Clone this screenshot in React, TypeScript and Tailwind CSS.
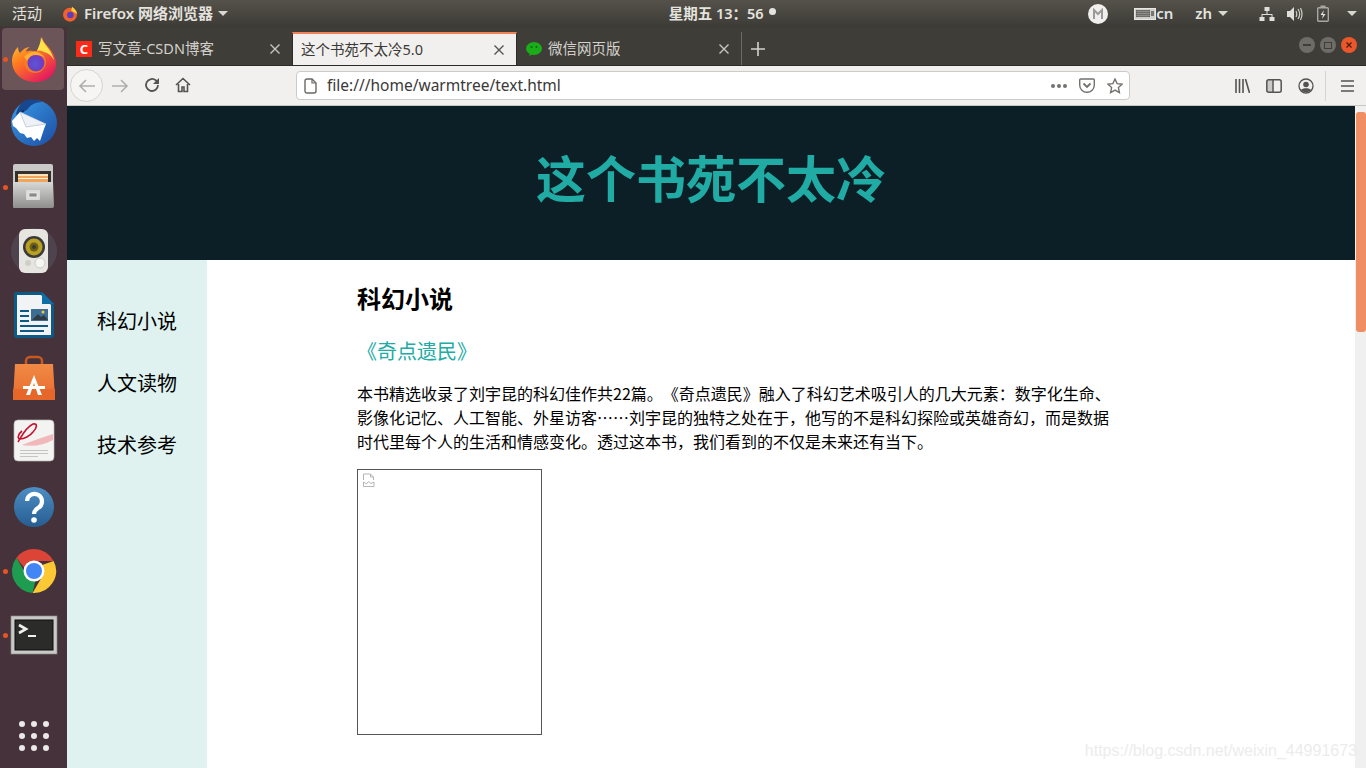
import React from 'react';

const CJK = "font-['Noto_Sans','Noto_Sans_CJK_SC',sans-serif]";

// dock icons
const FirefoxIcon = () => (
  <svg width="48" height="48" viewBox="0 0 48 48">
    <defs>
      <linearGradient id="ffa" x1="0" y1="0" x2="0.7" y2="1">
        <stop offset="0" stopColor="#ffd93b" />
        <stop offset="0.45" stopColor="#ff7a1f" />
        <stop offset="1" stopColor="#e3195f" />
      </linearGradient>
      <radialGradient id="ffb" cx="0.45" cy="0.55" r="0.6">
        <stop offset="0" stopColor="#5a58d6" />
        <stop offset="0.7" stopColor="#6b3fc4" />
        <stop offset="1" stopColor="#9a2fc0" />
      </radialGradient>
    </defs>
    <path d="M32 2c1 5 4 7 8 12 5 6 6 12 6 15 0 11-9 18-21 18C12 47 2 38 2 26c0-6 3-11 6-14 0 3 1 5 2 6 3-4 6-6 10-6-2 1-4 3-4 5 3-2 8-1 10 0 3-5 6-9 6-15z" fill="url(#ffa)" />
    <path d="M31 2c1 4 4 7 7 11 3 4 5 8 6 12-3-5-6-7-10-8-2-1-5-2-7-1 2-5 4-9 4-14z" fill="#ffe14a" />
    <circle cx="25" cy="27" r="11" fill="#f47a23" />
    <circle cx="26" cy="28" r="8.5" fill="url(#ffb)" />
    <path d="M14 22c3-4 8-6 13-5 3 1 6 3 7 5-4-2-9-3-13-1-2 1-3 3-4 5-1-2-2-3-3-4z" fill="#ffb02e" />
  </svg>
);

const ThunderbirdIcon = () => (
  <svg width="48" height="48" viewBox="0 0 48 48">
    <defs>
      <linearGradient id="tb" x1="0" y1="0" x2="1" y2="1">
        <stop offset="0" stopColor="#3a9be8" />
        <stop offset="1" stopColor="#1c4da3" />
      </linearGradient>
    </defs>
    <circle cx="24" cy="24" r="23" fill="url(#tb)" />
    <path d="M14 2c5-2 12-2 18 1-7 0-12 3-15 8L6 16c1-6 4-11 8-14z" fill="#17488f" />
    <path d="M2 22l8-9 26 12-2 5-2 6-2 6-3-3-3 3-3-4-4 1-3-4-4-1-4-5-3-2z" fill="#fff" />
    <path d="M10 13l26 12-20 3z" fill="#eef1f6" stroke="#aab5c6" strokeWidth="0.6" />
    <circle cx="13" cy="12" r="1.3" fill="#12305f" />
  </svg>
);

const FilesIcon = () => (
  <svg width="48" height="48" viewBox="0 0 48 48">
    <defs>
      <linearGradient id="fa" x1="0" y1="0" x2="0" y2="1">
        <stop offset="0" stopColor="#d8d8d6" />
        <stop offset="1" stopColor="#8e8e8c" />
      </linearGradient>
    </defs>
    <rect x="3" y="1" width="40" height="44" rx="2" fill="#c9c9c7" />
    <rect x="5" y="8" width="36" height="14" fill="#33302e" />
    <rect x="8" y="11" width="30" height="8" fill="#f0a55a" />
    <rect x="8" y="11" width="30" height="2" fill="#fbe2b9" />
    <rect x="8" y="15" width="30" height="1" fill="#fff3dd" />
    <path d="M3 19h40l1 24a2 2 0 0 1-2 2H5a2 2 0 0 1-2-2z" fill="url(#fa)" />
    <rect x="16" y="27" width="14" height="10" rx="1" fill="#dcdcda" />
    <rect x="19" y="30" width="8" height="4" fill="#8a8a88" stroke="#f2f2f2" strokeWidth="0.7" />
  </svg>
);

const SpeakerIcon = () => (
  <svg width="48" height="48" viewBox="0 0 48 48">
    <circle cx="24" cy="24" r="23" fill="#5b5a68" opacity="0.45" />
    <circle cx="24" cy="24" r="18" fill="#4a4450" opacity="0.6" />
    <rect x="9" y="2" width="29" height="44" rx="6" fill="#e6e5df" />
    <circle cx="24" cy="20" r="11" fill="#3a3a38" />
    <circle cx="24" cy="20" r="8.5" fill="#b8a024" />
    <circle cx="24" cy="20" r="4.5" fill="#6d5f16" />
    <circle cx="24" cy="20" r="2" fill="#3a3a38" />
    <circle cx="18" cy="36" r="3" fill="#cfcfc9" />
    <circle cx="30" cy="36" r="5" fill="#f5f5f2" stroke="#b4b4ae" strokeWidth="0.6" />
  </svg>
);

const WriterIcon = () => (
  <svg width="48" height="48" viewBox="0 0 48 48">
    <path d="M6 1h26l12 12v31a3 3 0 0 1-3 3H7a3 3 0 0 1-3-3V3a2 2 0 0 1 2-2z" fill="#0e5a87" />
    <path d="M7 4h24l10 10v30H7z" fill="#f1f3f4" />
    <path d="M32 1l12 12H32z" fill="#0e6ea6" />
    <rect x="10" y="19" width="9" height="2" fill="#0e5a87" />
    <rect x="10" y="24" width="9" height="2" fill="#0e5a87" />
    <rect x="10" y="29" width="9" height="2" fill="#0e5a87" />
    <rect x="10" y="34" width="28" height="2" fill="#0e5a87" />
    <rect x="10" y="39" width="24" height="2" fill="#0e5a87" />
    <rect x="21" y="18" width="17" height="12" fill="#3d6f93" />
    <path d="M22 29l6-6 3 3 3-2 4 5z" fill="#2f3c46" />
    <circle cx="33" cy="21" r="1.5" fill="#f1c83b" />
  </svg>
);

const StoreIcon = () => (
  <svg width="48" height="48" viewBox="0 0 48 48">
    <defs>
      <linearGradient id="st" x1="0" y1="0" x2="0" y2="1">
        <stop offset="0" stopColor="#f08a45" />
        <stop offset="1" stopColor="#e96a2c" />
      </linearGradient>
    </defs>
    <path d="M16 12V6a4 4 0 0 1 4-4h8a4 4 0 0 1 4 4v6" fill="none" stroke="#c9581f" strokeWidth="2.5" />
    <path d="M5 9h38l2 35a1 1 0 0 1-1 1H4a1 1 0 0 1-1-1z" fill="url(#st)" />
    <path d="M3 34h42l0 10a1 1 0 0 1-1 1H4a1 1 0 0 1-1-1z" fill="#e7662a" />
    <path d="M24 20l-8 20h4l4-12 4 12h4z" fill="#fff" />
    <rect x="13" y="31" width="22" height="3" fill="#fff" />
  </svg>
);

const EvinceIcon = () => (
  <svg width="48" height="48" viewBox="0 0 48 48">
    <rect x="4" y="1" width="40" height="41" rx="4" fill="#f3f3f1" stroke="#b8b8b6" strokeWidth="0.7" />
    <path d="M8 23c3-5 8-15 15-18 5-1 4 4 0 8-3 4-9 7-13 7-3 0-2-5 2-8" fill="none" stroke="#c8102e" strokeWidth="1.6" />
    <path d="M12 26c9-4 20-7 31-11v6c-9 5-20 7-31 5z" fill="#f0b8ba" />
    <rect x="10" y="31" width="28" height="1" fill="#c4c4c2" />
    <rect x="10" y="34" width="28" height="1" fill="#c4c4c2" />
    <rect x="10" y="37" width="18" height="1" fill="#c4c4c2" />
  </svg>
);

const HelpIcon = () => (
  <svg width="48" height="48" viewBox="0 0 48 48">
    <defs>
      <linearGradient id="hp" x1="0" y1="0" x2="0" y2="1">
        <stop offset="0" stopColor="#4d8ec4" />
        <stop offset="1" stopColor="#265d91" />
      </linearGradient>
    </defs>
    <circle cx="24" cy="24" r="20" fill="url(#hp)" />
    <path d="M17 18a7.5 7.5 0 1 1 11 7c-3 2-4 3-4 6" fill="none" stroke="#fff" strokeWidth="4.2" />
    <circle cx="24" cy="37" r="2.8" fill="#fff" />
  </svg>
);

const ChromeIcon = () => (
  <svg width="48" height="48" viewBox="0 0 48 48">
    <path d="M24 2a22 22 0 0 1 19.6 12H24a10 10 0 0 0-9.6 7L6.4 10.8A22 22 0 0 1 24 2z" fill="#db4437" />
    <path d="M43.6 14A22 22 0 0 1 22.6 46l9.6-16.6A10 10 0 0 0 32 18z" fill="#fcc934" />
    <path d="M6.4 10.8l8 13.6a10 10 0 0 0 11 9.5L22.6 46A22 22 0 0 1 6.4 10.8z" fill="#1e9c50" />
    <circle cx="24" cy="24" r="10.5" fill="#fff" />
    <circle cx="24" cy="24" r="8" fill="#4285f4" />
  </svg>
);

const TerminalIcon = () => (
  <svg width="48" height="48" viewBox="0 0 48 48">
    <rect x="1" y="5" width="46" height="38" fill="#c9c9c7" stroke="#8a8a88" strokeWidth="0.7" />
    <rect x="5" y="9" width="38" height="30" fill="#2b2b2a" stroke="#0d0d0d" strokeWidth="1" />
    <path d="M9 14l7 4-7 4" fill="none" stroke="#f0f0f0" strokeWidth="2.6" />
    <rect x="18" y="24" width="8" height="2" fill="#f0f0f0" />
  </svg>
);

const dockItems = [
  { name: 'firefox', icon: <FirefoxIcon />, running: true, active: true },
  { name: 'thunderbird', icon: <ThunderbirdIcon /> },
  { name: 'files', icon: <FilesIcon />, running: true },
  { name: 'rhythmbox', icon: <SpeakerIcon /> },
  { name: 'writer', icon: <WriterIcon /> },
  { name: 'store', icon: <StoreIcon /> },
  { name: 'evince', icon: <EvinceIcon /> },
  { name: 'help', icon: <HelpIcon /> },
  { name: 'chrome', icon: <ChromeIcon />, running: true },
  { name: 'terminal', icon: <TerminalIcon />, running: true },
];

const Dock = () => (
  <div className="w-[67px] h-[741px] shrink-0 bg-[#46323a] flex flex-col items-center">
    {dockItems.map((item) => (
      <div key={item.name} className="relative w-[67px] h-[64px] flex items-center justify-center">
        {item.active && <div className="absolute left-[2px] right-[3px] top-[1px] bottom-[1px] rounded bg-[#6c5558]" />}
        {item.running && <div className="absolute left-[3px] top-[30px] w-[5px] h-[5px] rounded-full bg-[#e95420]" />}
        <div className="relative">{item.icon}</div>
      </div>
    ))}
    <div className="mt-auto mb-[17px] grid grid-cols-3 gap-x-[6px] gap-y-[6px]">
      {Array.from({ length: 9 }).map((_, i) => (
        <div key={i} className="w-[6px] h-[6px] rounded-full bg-[#ebe8e8]" />
      ))}
    </div>
  </div>
);

const Caret = ({ className }: { className: string }) => (
  <div className={`w-0 h-0 border-x-[5px] border-x-transparent border-t-[5px] border-t-[#d8d7d2] ${className}`} />
);

const TopBar = () => (
  <div className="h-[27px] flex items-center bg-gradient-to-b from-[#55524b] to-[#3d3b36] text-[15px] text-[#e4e3df]">
    <span className="ml-[12px] w-[50px]">活动</span>
    <svg width="16" height="16" viewBox="0 0 48 48">
      <circle cx="24" cy="26" r="21" fill="#f2602b" />
      <path d="M30 2c8 5 15 13 15 22L28 14z" fill="#ffcf3a" />
      <circle cx="25" cy="27" r="10" fill="#5c3fc0" />
    </svg>
    <span className="ml-[6px] font-semibold">Firefox 网络浏览器</span>
    <Caret className="ml-[5px]" />
    <div className="flex-1 flex justify-center pr-[4px] pl-[132px]">
      <span className="font-semibold text-[14.5px]">星期五 13：56</span>
      <div className="ml-[5px] mt-[5px] w-[7px] h-[7px] rounded-full bg-[#e4e3df]" />
    </div>
    <div className="w-[20px] h-[20px] rounded-full bg-[#f0efed] flex items-center justify-center mr-[26px]">
      <svg width="12" height="12" viewBox="0 0 12 12">
        <path d="M2 11V2l4 4 4-4v9" fill="none" stroke="#9a9a98" strokeWidth="2" />
      </svg>
    </div>
    <svg width="22" height="12" viewBox="0 0 22 12">
      <rect x="0.5" y="0.5" width="21" height="11" fill="#cfcec9" stroke="#e8e7e3" />
      <rect x="2" y="2" width="14" height="7" fill="#5c5a55" />
      <path d="M2 3.5h14M2 5.5h14M2 7.5h14M4 2v7M6 2v7M8 2v7M10 2v7M12 2v7M14 2v7" stroke="#aaa9a4" strokeWidth="0.5" />
      <rect x="17" y="3" width="3" height="5" fill="#77756f" />
    </svg>
    <span className="text-[15px] font-semibold text-[#dfe3e6] w-[39px]">cn</span>
    <span className="font-semibold">zh</span>
    <Caret className="ml-[6px] mr-[31px]" />
    <svg width="16" height="16" viewBox="0 0 16 16" fill="#e0dfdb">
      <rect x="5.5" y="1" width="5" height="4" />
      <rect x="0.5" y="11" width="5" height="4" />
      <rect x="10.5" y="11" width="5" height="4" />
      <path d="M7.5 5h1v3h5v3h-1V9H3.5v2h-1V8h5z" />
    </svg>
    <svg className="ml-[11px]" width="17" height="16" viewBox="0 0 17 16" fill="none">
      <path d="M1 5h3l4-4v14l-4-4H1z" fill="#e0dfdb" />
      <path d="M10 5c1 2 1 4 0 6M12 3c2 3 2 7 0 10M14.5 2c2 4 2 8 0 12" stroke="#d0cfca" strokeWidth="1.2" />
    </svg>
    <svg className="ml-[14px]" width="12" height="17" viewBox="0 0 12 17" fill="none">
      <rect x="0.7" y="2.7" width="10.6" height="13.6" rx="1" stroke="#a9a8a3" strokeWidth="1.4" />
      <rect x="3.5" y="0.5" width="5" height="2" fill="#a9a8a3" />
      <path d="M7 5L3.5 10H6l-1 4 3.5-5H6z" fill="#e4e3df" />
    </svg>
    <Caret className="ml-[18px] mr-[9px]" />
  </div>
);

const CloseX = ({ color }: { color: string }) => (
  <svg width="12" height="12" viewBox="0 0 12 12" className="shrink-0">
    <path d="M1.5 1.5l9 9M10.5 1.5l-9 9" stroke={color} strokeWidth="1.4" />
  </svg>
);

const TabBar = () => (
  <div className="h-[38px] flex items-stretch bg-[#3f3d38] text-[14.5px]">
    <div className="w-[225px] flex items-center pl-[9px] pr-[11px] text-[#d3d1cc] mt-[5px]">
      <div className="w-[16px] h-[16px] bg-[#fc2a18] text-white font-bold text-[13px] leading-[16px] text-center">C</div>
      <span className="ml-[6px] mt-[1px] flex-1">写文章-CSDN博客</span>
      <CloseX color="#c8c6c1" />
    </div>
    <div className="w-[225px] mt-[5px] flex items-center pl-[8px] pr-[11px] bg-[#f2f0ee] text-[#3b3a38] border-t-2 border-[#ee8259] border-x border-x-[#2c2b28]">
      <span className="mt-[1px] flex-1">这个书苑不太冷5.0</span>
      <CloseX color="#55534f" />
    </div>
    <div className="w-[225px] mt-[5px] flex items-center pl-[9px] pr-[11px] text-[#d3d1cc] border-r border-[#6b6964]">
      <svg width="16" height="14" viewBox="0 0 16 14">
        <ellipse cx="8" cy="6.5" rx="8" ry="6.5" fill="#1aad19" />
        <path d="M4 11l-1 3 4-2z" fill="#1aad19" />
        <circle cx="5.5" cy="5" r="1" fill="#0c6b0b" />
        <circle cx="10.5" cy="5" r="1" fill="#0c6b0b" />
      </svg>
      <span className="ml-[6px] mt-[1px] flex-1">微信网页版</span>
      <CloseX color="#c8c6c1" />
    </div>
    <div className="w-[32px] mt-[5px] flex items-center justify-center">
      <svg width="14" height="14" viewBox="0 0 14 14">
        <path d="M7 0v14M0 7h14" stroke="#d3d1cc" strokeWidth="1.6" />
      </svg>
    </div>
    <div className="ml-auto mr-[9px] flex items-center gap-[5px] mb-[2px]">
      <div className="w-[16px] h-[16px] rounded-full bg-[#6e6c67] flex items-center justify-center">
        <div className="w-[8px] h-[2px] bg-[#3f3d38]" />
      </div>
      <div className="w-[16px] h-[16px] rounded-full bg-[#6e6c67] flex items-center justify-center">
        <div className="w-[8px] h-[7px] border border-[#3f3d38]" />
      </div>
      <div className="w-[16px] h-[16px] rounded-full bg-[#e9572a] flex items-center justify-center">
        <svg width="8" height="8" viewBox="0 0 8 8">
          <path d="M1.5 1.5l5 5M6.5 1.5l-5 5" stroke="#4a1c0c" strokeWidth="1.2" />
        </svg>
      </div>
    </div>
  </div>
);

const NavBar = () => (
  <div className="h-[41px] flex items-center bg-[#f2f0ee] border-b border-[#c9c7c3] border-t border-t-[#2c2b28]">
    <div className="ml-[3px] w-[33px] h-[33px] rounded-full border border-[#d6d4d0] bg-[#f6f5f3] flex items-center justify-center">
      <svg width="18" height="16" viewBox="0 0 18 16" fill="none">
        <path d="M17 8H2M8 2L2 8l6 6" stroke="#b0aeaa" strokeWidth="1.6" />
      </svg>
    </div>
    <svg className="ml-[8px]" width="18" height="16" viewBox="0 0 18 16" fill="none">
      <path d="M1 8h15M10 2l6 6-6 6" stroke="#b0aeaa" strokeWidth="1.6" />
    </svg>
    <svg className="ml-[15px] mb-[2px]" width="16" height="16" viewBox="0 0 16 16" fill="none">
      <path d="M14 8a6 6 0 1 1-2-4.5L14 5.5" stroke="#55534f" strokeWidth="1.8" />
      <path d="M15 1v6H9z" fill="#55534f" />
    </svg>
    <svg className="ml-[15px] mb-[1px]" width="16" height="16" viewBox="0 0 16 16" fill="none">
      <path d="M1 8l7-6.5L15 8M3.5 7v7.5H7V10h2v4.5h3.5V7" stroke="#55534f" strokeWidth="1.6" />
    </svg>
    <div className="ml-[105px] w-[834px] h-[29px] rounded bg-white border border-[#cdcbc7] flex items-center pl-[7px] pr-[6px]">
      <svg width="14" height="16" viewBox="0 0 14 16" fill="none">
        <path d="M3 1h5l4 4v8a2 2 0 0 1-2 2H3a2 2 0 0 1-2-2V3a2 2 0 0 1 2-2z" stroke="#6a6866" strokeWidth="1.4" />
        <path d="M8 1v4h4" stroke="#6a6866" strokeWidth="1.2" />
      </svg>
      <span className="ml-[9px] mt-[1px] text-[15.5px] text-[#3a3937] flex-1">file:///home/warmtree/text.html</span>
      <div className="flex gap-[2px] mr-[12px]">
        <div className="w-[4px] h-[4px] rounded-full bg-[#74726f]" />
        <div className="w-[4px] h-[4px] rounded-full bg-[#74726f]" />
        <div className="w-[4px] h-[4px] rounded-full bg-[#74726f]" />
      </div>
      <svg width="16" height="15" viewBox="0 0 16 15" fill="none">
        <path d="M1.7 1h12.6a1 1 0 0 1 1 1v5a7.3 7.3 0 0 1-14.6 0V2a1 1 0 0 1 1-1z" stroke="#74726f" strokeWidth="1.4" />
        <path d="M4.5 5.5L8 9l3.5-3.5" stroke="#74726f" strokeWidth="1.8" />
      </svg>
      <svg className="ml-[12px]" width="16" height="16" viewBox="0 0 16 16" fill="none">
        <path d="M8 1l2.1 4.6 5 .6-3.7 3.4 1 5L8 12.1 3.6 14.6l1-5L.9 6.2l5-.6z" stroke="#74726f" strokeWidth="1.4" />
      </svg>
    </div>
    <svg className="ml-[105px]" width="15" height="14" viewBox="0 0 15 14" fill="none">
      <path d="M1 0v14M4.5 0v14M8 0v14M10.5 0l4 14" stroke="#55534f" strokeWidth="1.6" />
    </svg>
    <svg className="ml-[16px]" width="16" height="14" viewBox="0 0 16 14" fill="none">
      <rect x="0.8" y="0.8" width="14.4" height="12.4" rx="2" stroke="#55534f" strokeWidth="1.5" />
      <rect x="1" y="1" width="5.5" height="12" fill="#55534f" opacity="0.25" />
      <path d="M7 1v12" stroke="#55534f" strokeWidth="1.5" />
    </svg>
    <svg className="ml-[16px]" width="16" height="16" viewBox="0 0 16 16" fill="none">
      <circle cx="8" cy="8" r="7" stroke="#55534f" strokeWidth="1.3" />
      <circle cx="8" cy="6.5" r="2.8" fill="#55534f" />
      <path d="M2.8 12c2-2.5 8.400-2.500 10.400 0-2 3-8.400 3-10.400 0z" fill="#55534f" />
    </svg>
    <div className="ml-[11px] w-px h-[30px] bg-[#d6d4d0]" />
    <svg className="ml-[15px]" width="13" height="12" viewBox="0 0 13 12">
      <path d="M0 1h13M0 6h13M0 11h13" stroke="#55534f" strokeWidth="1.7" />
    </svg>
  </div>
);

const BrokenImage = () => (
  <svg width="14" height="15" viewBox="0 0 14 15" fill="none">
    <path d="M1.5 7V1h7l3 3v3" stroke="#b5b5b5" />
    <path d="M8.5 1v3h3" stroke="#b5b5b5" />
    <path d="M1.5 9l3 2 2-2.5 2.5 2 3-1.5v4.500H1.500z" stroke="#b5b5b5" />
  </svg>
);

const Page = () => (
  <div className="relative flex-1 flex flex-col overflow-hidden bg-white font-['Noto_Sans_CJK_SC','Noto_Sans',sans-serif]">
    <div className="h-[154px] pr-[11px] pb-[13px] bg-[#0c1f27] flex items-center justify-center">
      <h1 className="text-[50px] font-bold text-[#20aba5]">这个书苑不太冷</h1>
    </div>
    <div className="flex flex-1">
      <div className="w-[140px] bg-[#dff2f0] pt-[41px] flex flex-col items-center gap-[22px] text-[20px] leading-[40px] text-black">
        <div>科幻小说</div>
        <div>人文读物</div>
        <div>技术参考</div>
      </div>
      <div className="flex-1 pl-[150px] pt-[19px]">
        <h2 className="text-[24px] leading-[38px] font-bold text-black">科幻小说</h2>
        <h3 className="mt-[19px] text-[20px] leading-[30px] text-[#20aba5]">《奇点遗民》</h3>
        <p className="mt-[15px] w-[756px] text-[16px] leading-[24px] text-black">
          本书精选收录了刘宇昆的科幻佳作共22篇。《奇点遗民》融入了科幻艺术吸引人的几大元素：数字化生命、影像化记忆、人工智能、外星访客……刘宇昆的独特之处在于，他写的不是科幻探险或英雄奇幻，而是数据时代里每个人的生活和情感变化。透过这本书，我们看到的不仅是未来还有当下。
        </p>
        <div className="mt-[16px] w-[185px] h-[266px] border border-[#555555] pl-[4px] pt-[3px]">
          <BrokenImage />
        </div>
      </div>
    </div>
    <div className="absolute right-0 top-0 bottom-0 w-[11px] bg-[#f0f0f0]">
      <div className="mx-auto mt-[6px] w-[10px] h-[220px] rounded-[3px] bg-[#f08d63]" />
    </div>
    <div className="absolute right-[9px] bottom-[7px] text-[16px] leading-[20px] text-[#ececec] font-['Liberation_Sans',sans-serif]">
      https://blog.csdn.net/weixin_44991673
    </div>
  </div>
);

export default function App() {
  return (
    <div className={`w-[1366px] h-[768px] overflow-hidden [text-spacing-trim:space-all] ${CJK}`}>
      <TopBar />
      <div className="flex h-[741px]">
        <Dock />
        <div className="flex-1 flex flex-col min-w-0">
          <TabBar />
          <NavBar />
          <Page />
        </div>
      </div>
    </div>
  );
}
